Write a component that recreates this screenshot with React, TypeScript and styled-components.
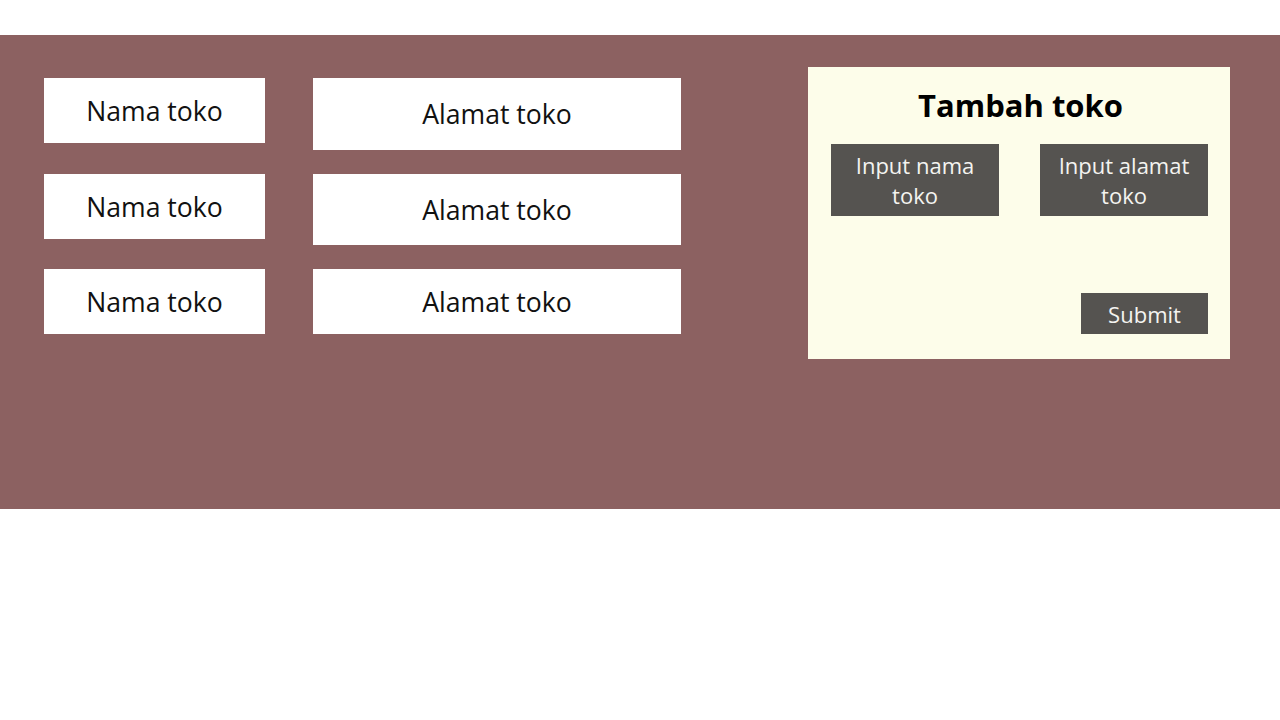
import { Fragment } from "react";
import styled, { createGlobalStyle } from "styled-components";

const GlobalStyle = createGlobalStyle`
  body {
    margin: 0;
    background: #ffffff;
    font-family: "Open Sans", "Noto Sans", sans-serif;
  }
`;

const Band = styled.div`
  margin-top: 35px;
  height: 474px;
  background-color: #8c6161;
  display: flex;
  justify-content: space-between;
  align-items: flex-start;
  padding: 0 50px 0 44px;
`;

const StoreList = styled.div`
  margin-top: 43px;
  display: grid;
  grid-template-columns: 221px 368px;
  grid-template-rows: 72px 71px 65px;
  column-gap: 48px;
  row-gap: 24px;
`;

const Cell = styled.div<{ $height?: number }>`
  height: ${(p) => (p.$height ? `${p.$height}px` : "100%")};
  background-color: #ffffff;
  display: flex;
  align-items: center;
  justify-content: center;
  font-size: 26.6px;
  color: #111111;
`;

const Panel = styled.div`
  margin-top: 32px;
  width: 422px;
  height: 292px;
  box-sizing: border-box;
  padding: 16px 22px 25px 23px;
  background-color: #fdfdea;
  display: flex;
  flex-direction: column;
`;

const Title = styled.h2`
  margin: 0 0 0 2px;
  text-align: center;
  font-size: 31px;
  font-weight: 700;
  line-height: 44px;
  color: #000000;
`;

const InputRow = styled.div`
  margin-top: 17px;
  display: flex;
  justify-content: space-between;
`;

const InputBox = styled.div`
  width: 168px;
  height: 72px;
  background-color: #555350;
  color: #f4f4f0;
  font-size: 22px;
  line-height: 30px;
  text-align: center;
  display: flex;
  align-items: center;
  justify-content: center;
  padding: 0 8px;
  box-sizing: border-box;
`;

const SubmitButton = styled.button`
  margin-top: auto;
  align-self: flex-end;
  width: 127px;
  height: 41px;
  border: none;
  background-color: #555350;
  color: #f4f4f0;
  font-family: "Open Sans", "Noto Sans", sans-serif;
  font-size: 22px;
  padding: 0;
`;

const stores = [{ name: 65 }, { name: 65 }, { name: 65 }];

export default function App() {
  return (
    <>
      <GlobalStyle />
      <Band>
        <StoreList>
          {stores.map((s, i) => (
            <Fragment key={i}>
              <Cell $height={s.name}>Nama toko</Cell>
              <Cell>Alamat toko</Cell>
            </Fragment>
          ))}
        </StoreList>
        <Panel>
          <Title>Tambah toko</Title>
          <InputRow>
            <InputBox>Input nama toko</InputBox>
            <InputBox>Input alamat toko</InputBox>
          </InputRow>
          <SubmitButton>Submit</SubmitButton>
        </Panel>
      </Band>
    </>
  );
}
